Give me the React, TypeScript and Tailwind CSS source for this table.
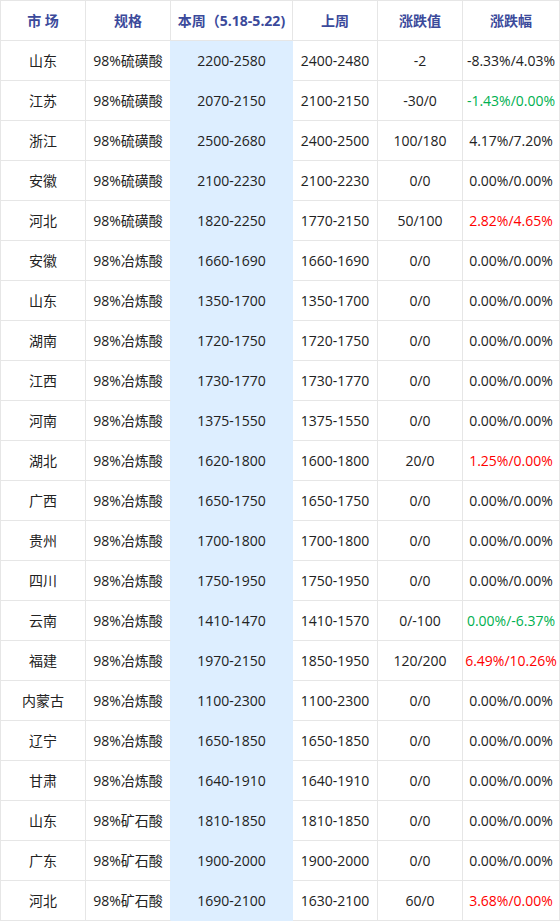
import { FC, ReactElement } from "react";

type Row = {
  market: string;
  spec: string;
  now: string;
  last: string;
  diff: string;
  pct: string;
  tone?: "up" | "down";
};

const rows: Row[] = [
  { market: "山东", spec: "98%硫磺酸", now: "2200-2580", last: "2400-2480", diff: "-2", pct: "-8.33%/4.03%" },
  { market: "江苏", spec: "98%硫磺酸", now: "2070-2150", last: "2100-2150", diff: "-30/0", pct: "-1.43%/0.00%", tone: "down" },
  { market: "浙江", spec: "98%硫磺酸", now: "2500-2680", last: "2400-2500", diff: "100/180", pct: "4.17%/7.20%" },
  { market: "安徽", spec: "98%硫磺酸", now: "2100-2230", last: "2100-2230", diff: "0/0", pct: "0.00%/0.00%" },
  { market: "河北", spec: "98%硫磺酸", now: "1820-2250", last: "1770-2150", diff: "50/100", pct: "2.82%/4.65%", tone: "up" },
  { market: "安徽", spec: "98%冶炼酸", now: "1660-1690", last: "1660-1690", diff: "0/0", pct: "0.00%/0.00%" },
  { market: "山东", spec: "98%冶炼酸", now: "1350-1700", last: "1350-1700", diff: "0/0", pct: "0.00%/0.00%" },
  { market: "湖南", spec: "98%冶炼酸", now: "1720-1750", last: "1720-1750", diff: "0/0", pct: "0.00%/0.00%" },
  { market: "江西", spec: "98%冶炼酸", now: "1730-1770", last: "1730-1770", diff: "0/0", pct: "0.00%/0.00%" },
  { market: "河南", spec: "98%冶炼酸", now: "1375-1550", last: "1375-1550", diff: "0/0", pct: "0.00%/0.00%" },
  { market: "湖北", spec: "98%冶炼酸", now: "1620-1800", last: "1600-1800", diff: "20/0", pct: "1.25%/0.00%", tone: "up" },
  { market: "广西", spec: "98%冶炼酸", now: "1650-1750", last: "1650-1750", diff: "0/0", pct: "0.00%/0.00%" },
  { market: "贵州", spec: "98%冶炼酸", now: "1700-1800", last: "1700-1800", diff: "0/0", pct: "0.00%/0.00%" },
  { market: "四川", spec: "98%冶炼酸", now: "1750-1950", last: "1750-1950", diff: "0/0", pct: "0.00%/0.00%" },
  { market: "云南", spec: "98%冶炼酸", now: "1410-1470", last: "1410-1570", diff: "0/-100", pct: "0.00%/-6.37%", tone: "down" },
  { market: "福建", spec: "98%冶炼酸", now: "1970-2150", last: "1850-1950", diff: "120/200", pct: "6.49%/10.26%", tone: "up" },
  { market: "内蒙古", spec: "98%冶炼酸", now: "1100-2300", last: "1100-2300", diff: "0/0", pct: "0.00%/0.00%" },
  { market: "辽宁", spec: "98%冶炼酸", now: "1650-1850", last: "1650-1850", diff: "0/0", pct: "0.00%/0.00%" },
  { market: "甘肃", spec: "98%冶炼酸", now: "1640-1910", last: "1640-1910", diff: "0/0", pct: "0.00%/0.00%" },
  { market: "山东", spec: "98%矿石酸", now: "1810-1850", last: "1810-1850", diff: "0/0", pct: "0.00%/0.00%" },
  { market: "广东", spec: "98%矿石酸", now: "1900-2000", last: "1900-2000", diff: "0/0", pct: "0.00%/0.00%" },
  { market: "河北", spec: "98%矿石酸", now: "1690-2100", last: "1630-2100", diff: "60/0", pct: "3.68%/0.00%", tone: "up" },
];

const headers = ["市 场", "规格", "本周（5.18-5.22)", "上周", "涨跌值", "涨跌幅"];

const cell = "flex items-center justify-center whitespace-nowrap border-r border-b border-[#e6e6e6]";

const App: FC = (): ReactElement => {
  return (
    <main className="w-[560px] bg-white text-[14px] text-[#222] font-['Open_Sans','Noto_Sans_CJK_SC',sans-serif]">
      <div className="grid grid-cols-[85px_85px_122px_85px_85px_97px] border-l border-t border-[#e6e6e6]">
        {headers.map((h) => (
          <div key={h} className={`${cell} h-[40px] font-bold text-[#3b4a9b]`}>
            {h}
          </div>
        ))}
        {rows.map((r, i) => (
          <div key={i} className="contents">
            <div className={`${cell} h-[40px]`}>{r.market}</div>
            <div className={`${cell} h-[40px] border-r-[#ddeeff]`}>{r.spec}</div>
            <div className={`${cell} h-[40px] bg-[#ddeeff] border-r-[#ddeeff] border-b-[#ddeeff]`}>{r.now}</div>
            <div className={`${cell} h-[40px]`}>{r.last}</div>
            <div className={`${cell} h-[40px]`}>{r.diff}</div>
            <div
              className={`${cell} h-[40px] ${
                r.tone === "up" ? "text-[#ff0000]" : r.tone === "down" ? "text-[#00b050]" : ""
              }`}
            >
              {r.pct}
            </div>
          </div>
        ))}
      </div>
    </main>
  );
};

export default App;
